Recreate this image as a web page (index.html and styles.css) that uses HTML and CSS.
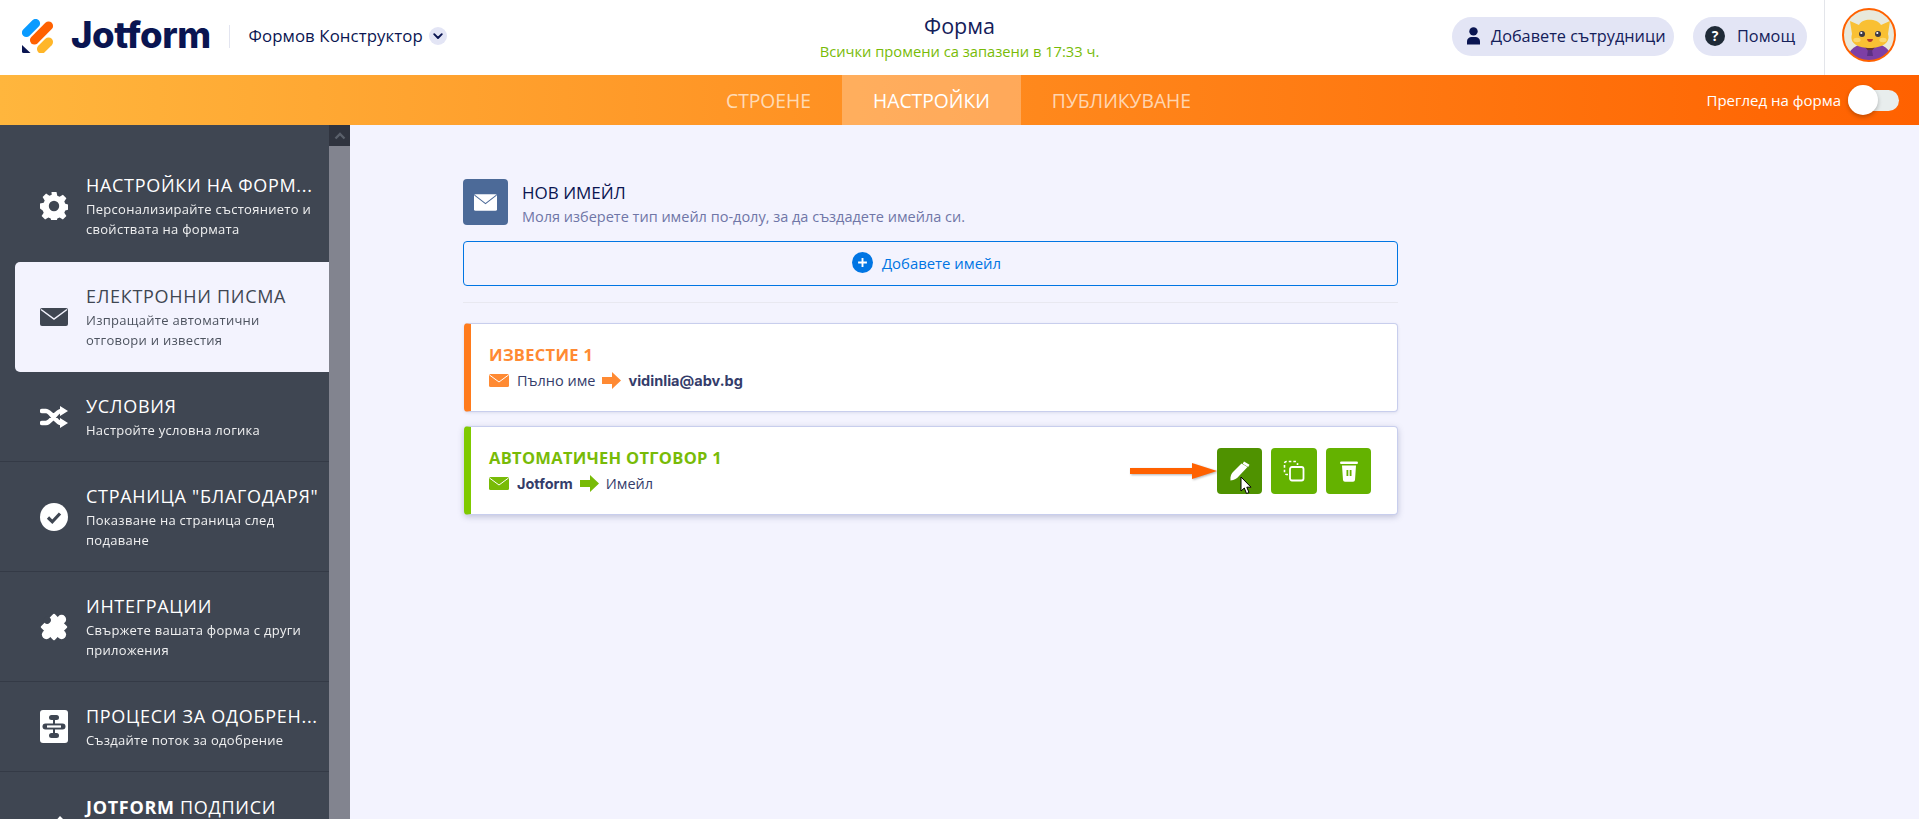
FILE: index.html
```html
<!DOCTYPE html>
<html lang="bg">
<head>
<meta charset="utf-8">
<title>Форма</title>
<link rel="stylesheet" href="styles.css">
</head>
<body>
<header class="topbar">
  <div class="brand">
    <svg class="logo-mark" viewBox="0 0 32 34" width="32" height="34">
      <rect x="-4.500" y="-11" width="9" height="22" rx="4.500" transform="translate(9 9) rotate(45)" fill="#0a9bff"/>
      <rect x="-4.500" y="-14.500" width="9" height="29" rx="4.500" transform="translate(19.500 14) rotate(45)" fill="#ff6100"/>
      <rect x="-4.500" y="-9.500" width="9" height="19" rx="4.500" transform="translate(23 26.500) rotate(45)" fill="#ffb629"/>
      <path d="M0 26 L8.500 34 H1.500 Q0 34 0 32.500 Z" fill="#0a1551"/>
    </svg>
    <span class="wordmark">Jotform</span>
    <span class="brand-sep"></span>
    <span class="builder">Формов Конструктор</span>
    <span class="chev"><svg viewBox="0 0 14 14" width="14" height="14"><path d="M3.200 5.200 7 9 10.800 5.200" fill="none" stroke="#0a1551" stroke-width="1.900" stroke-linecap="round" stroke-linejoin="round"/></svg></span>
  </div>
  <div class="doc">
    <div class="doc-title">Форма</div>
    <div class="doc-status">Всички промени са запазени в 17:33 ч.</div>
  </div>
  <div class="actions">
    <a class="pill collab"><svg viewBox="0 0 14 18" width="15" height="18"><circle cx="7" cy="4.400" r="4.200" fill="#0a1551"/><path d="M0.500 17.500v-3.200C.5 11.600 2.600 10 5 10h4c2.400 0 4.500 1.600 4.500 4.300v3.200z" fill="#0a1551"/></svg>Добавете сътрудници</a>
    <a class="pill help"><svg viewBox="0 0 20 20" width="20" height="20"><circle cx="10" cy="10" r="10" fill="#1f2a37"/><text x="10" y="15" text-anchor="middle" class="q">?</text></svg>Помощ</a>
    <div class="avatar-wrap">
      <svg class="avatar" viewBox="0 0 54 54" width="54" height="54">
        <defs><clipPath id="av"><circle cx="27" cy="27" r="26"/></clipPath></defs>
        <circle cx="27" cy="27" r="26" fill="#e8e9dc"/>
        <g clip-path="url(#av)">
          <path d="M5 54c0-12 9-19 23-19s22 7 22 19z" fill="#7d3fa5"/>
          <path d="M22 38h12l-6 7z" fill="#6a3a28"/>
          <path d="M26 42h4l1 6h-6z" fill="#5c2f82"/>
          <path d="M8 13l9 4c3-7 18-7 22 0l9-4-2 13c3 9-7 14-18 14S7 36 10 26z" fill="#f9c033"/>
          <circle cx="20" cy="26" r="3" fill="#3e3a44"/>
          <circle cx="36" cy="26" r="3" fill="#3e3a44"/>
          <circle cx="19.300" cy="25" r="1.100" fill="#fff"/>
          <circle cx="35.300" cy="25" r="1.100" fill="#fff"/>
          <ellipse cx="15" cy="32" rx="3.600" ry="2.200" fill="#fbd76e"/>
          <ellipse cx="41" cy="32" rx="3.600" ry="2.200" fill="#fbd76e"/>
          <path d="M25 31h6q-.5 3-3 3t-3-3z" fill="#b5382a"/>
        </g>
        <circle cx="27" cy="27" r="26" fill="none" stroke="#ff6100" stroke-width="2"/>
      </svg>
    </div>
  </div>
</header>

<nav class="tabs">
  <div class="tab-list">
    <a class="tab">СТРОЕНЕ</a>
    <a class="tab active">НАСТРОЙКИ</a>
    <a class="tab">ПУБЛИКУВАНЕ</a>
  </div>
  <div class="preview">
    <span>Преглед на форма</span>
    <span class="switch"><span class="knob"></span></span>
  </div>
</nav>

<div class="body">
  <aside class="sidebar">
    <ul class="menu">
      <li class="item first">
        <svg class="mi" viewBox="0 0 28 28" width="28" height="28"><path fill="#fff" fill-rule="evenodd" d="M11.500 0h5l.8 3.800 2.300 1 3.300-2.100 3.500 3.500-2.100 3.300 1 2.300 3.700.8v5l-3.700.8-1 2.300 2.100 3.300-3.500 3.500-3.300-2.100-2.300 1-.8 3.600h-5l-.8-3.600-2.300-1-3.300 2.100-3.500-3.500 2.100-3.300-1-2.300L0 16.500v-5l3.700-.8 1-2.300L2.600 5.100l3.500-3.500 3.300 2.100 2.300-1zM14 8.800a5.200 5.200 0 1 0 0 10.400 5.200 5.200 0 0 0 0-10.400z"/></svg>
        <div class="it"><div class="tt">НАСТРОЙКИ НА ФОРМ...</div><div class="ds">Персонализирайте състоянието и свойствата на формата</div></div>
      </li>
      <li class="item active">
        <svg class="mi" viewBox="0 0 28 18" width="28" height="18"><rect width="28" height="18" rx="2" fill="#3f4652"/><path d="M1 1.500 14 11 27 1.500" fill="none" stroke="#f3f3fe" stroke-width="1.500"/></svg>
        <div class="it"><div class="tt">ЕЛЕКТРОННИ ПИСМА</div><div class="ds">Изпращайте автоматични отговори и известия</div></div>
      </li>
      <li class="item">
        <svg class="mi" viewBox="0 0 28 22" width="28" height="22"><path fill="none" stroke="#fff" stroke-width="4.600" stroke-linecap="round" d="M2 5h4c5 0 10 12 15 12h2M2 17h4c5 0 10-12 15-12h2"/><path fill="#fff" d="M20 0l8 5-8 5zM20 12l8 5-8 5z"/></svg>
        <div class="it"><div class="tt">УСЛОВИЯ</div><div class="ds">Настройте условна логика</div></div>
      </li>
      <li class="item">
        <svg class="mi" viewBox="0 0 28 28" width="28" height="28"><circle cx="14" cy="14" r="14" fill="#fff"/><path d="M8 14.500l4.300 4.300L20 10.500" fill="none" stroke="#3f4652" stroke-width="3.200"/></svg>
        <div class="it"><div class="tt">СТРАНИЦА "БЛАГОДАРЯ"</div><div class="ds">Показване на страница след подаване</div></div>
      </li>
      <li class="item">
        <svg class="mi" viewBox="1 1 26 26" width="28" height="28"><g transform="rotate(45 14 14)"><rect x="5" y="5" width="18" height="18" rx="1" fill="#fff"/><circle cx="14" cy="4" r="4.200" fill="#fff"/><circle cx="24" cy="14" r="4.200" fill="#fff"/><circle cx="14" cy="24" r="4.200" fill="#fff"/><circle cx="5" cy="14" r="3.400" fill="#3f4652"/></g></svg>
        <div class="it"><div class="tt">ИНТЕГРАЦИИ</div><div class="ds">Свържете вашата форма с други приложения</div></div>
      </li>
      <li class="item">
        <svg class="mi" viewBox="0 0 28 33" width="28" height="33"><rect width="28" height="33" rx="3" fill="#fff"/><g fill="#3f4652"><rect x="9" y="5" width="10" height="5" rx="2.500"/><rect x="2.500" y="13.500" width="23" height="6" rx="3"/><rect x="9" y="23" width="10" height="5" rx="2.500"/><rect x="13" y="9" width="2" height="15"/></g><rect x="7" y="15.400" width="14" height="2.200" fill="#fff"/></svg>
        <div class="it"><div class="tt">ПРОЦЕСИ ЗА ОДОБРЕН...</div><div class="ds">Създайте поток за одобрение</div></div>
      </li>
      <li class="item last">
        <svg class="mi" viewBox="0 0 28 28" width="28" height="28"><path fill="#fff" d="M20 1l7 7-15 15-9 3 3-9z"/></svg>
        <div class="it"><div class="tt"><b>JOTFORM</b> ПОДПИСИ</div></div>
      </li>
    </ul>
    <div class="scroll"><div class="scroll-up"><svg viewBox="0 0 12 8" width="12" height="8"><path d="M1.500 6.500 6 2l4.500 4.500" fill="none" stroke="#5a606b" stroke-width="2.400"/></svg></div></div>
  </aside>

  <main class="main">
    <section class="panel">
      <div class="head">
        <span class="head-ico"><svg viewBox="0 0 22 16" width="23" height="17"><rect width="22" height="16" rx="1.500" fill="#fff"/><path d="M.5 1 11 9 21.500 1" fill="none" stroke="#4c6a98" stroke-width="1"/></svg></span>
        <div class="head-txt">
          <div class="head-t">НОВ ИМЕЙЛ</div>
          <div class="head-d">Моля изберете тип имейл по-долу, за да създадете имейла си.</div>
        </div>
      </div>
      <button class="add"><svg viewBox="0 0 20 20" width="21" height="21"><circle cx="10" cy="10" r="10" fill="#0075e3"/><path d="M10 5.800v8.400M5.800 10h8.400" stroke="#fff" stroke-width="1.800"/></svg>Добавете имейл</button>
      <div class="rule"></div>

      <article class="card orange">
        <div class="c-t">ИЗВЕСТИЕ 1</div>
        <div class="c-l">
          <svg viewBox="0 0 20 13" width="20" height="13"><rect width="20" height="13" rx="1.500" fill="#ff8a33"/><path d="M.5 1 10 8 19.500 1" fill="none" stroke="#fff" stroke-width="1"/></svg>
          <span>Пълно име</span>
          <svg class="arr" viewBox="0 0 19 17" width="19" height="17"><path d="M0 5h10V0l9 8.500-9 8.500v-5H0z" fill="#ff8a33"/></svg>
          <strong>vidinlia@abv.bg</strong>
        </div>
      </article>

      <article class="card green">
        <div class="c-t">АВТОМАТИЧЕН ОТГОВОР 1</div>
        <div class="c-l">
          <svg viewBox="0 0 20 13" width="20" height="13"><rect width="20" height="13" rx="1.500" fill="#78bb07"/><path d="M.5 1 10 8 19.500 1" fill="none" stroke="#fff" stroke-width="1"/></svg>
          <strong>Jotform</strong>
          <svg class="arr" viewBox="0 0 19 17" width="19" height="17"><path d="M0 5h10V0l9 8.500-9 8.500v-5H0z" fill="#78bb07"/></svg>
          <span>Имейл</span>
        </div>
        <div class="btns">
          <svg class="callout" viewBox="0 0 87 18" width="87" height="18"><path d="M0 6h62V1l25 8-25 8v-5H0z" fill="#ff6100"/></svg>
          <span class="b hover"><svg viewBox="0 0 20 20" width="20" height="20"><path d="M.5 19.500c-.5-4.500 1-7 3-9l8-8 6 3.500-8.500 9c-2 2.200-4.500 4.500-8.500 4.500z" fill="#fff"/><path d="M14 .5 19.500 3.700 18.200 6 12.700 2.800z" fill="#fff"/></svg>
            <svg class="cursor" viewBox="0 0 12 19" width="12" height="19"><path d="M1 1v14l3.300-3 2.200 5.500 2.500-1-2.200-5.300H11z" fill="#fff" stroke="#000" stroke-width="1"/></svg></span>
          <span class="b"><svg viewBox="0 0 22 22" width="22" height="22"><path d="M5 14.500H3.500a2 2 0 0 1-2-2V3.500a2 2 0 0 1 2-2h9a2 2 0 0 1 2 2V5" fill="none" stroke="#fff" stroke-width="1.600" stroke-dasharray="2.600 2"/><rect x="7" y="7" width="13.500" height="13.500" rx="2" fill="none" stroke="#fff" stroke-width="1.800"/></svg></span>
          <span class="b last-b"><svg viewBox="0 0 18 22" width="18" height="22"><rect x="0" y="1.500" width="18" height="2.600" rx="1.300" fill="#fff"/><path d="M2 5.500h14l-1 14.500a2 2 0 0 1-2 1.800H5a2 2 0 0 1-2-1.800z" fill="#fff"/><rect x="6.500" y="10" width="1.800" height="6" fill="#64b200"/><rect x="9.700" y="10" width="1.800" height="6" fill="#64b200"/></svg></span>
        </div>
      </article>
    </section>
  </main>
</div>
</body>
</html>
```
FILE: styles.css
```css
* { box-sizing: border-box; }
html, body { margin: 0; height: 100%; overflow: hidden; }
body { font-family: "Open Sans", "Noto Sans", sans-serif; background: #f3f3fe; color: #0a1551; height: 819px; display: flex; flex-direction: column; }

.topbar { height: 75px; background: #fff; display: grid; grid-template-columns: 1fr auto 1fr; align-items: center; flex: none; padding-left: 22px; }
.brand { display: flex; align-items: center; margin-top: -3px; }
.wordmark { font-family: Inter, "Liberation Sans", sans-serif; font-weight: 800; font-size: 36.500px; line-height: 40px; letter-spacing: -0.5px; margin: -3px 0 0 17px; color: #0a1551; }
.brand-sep { width: 1px; height: 23px; background: #e3e5f0; margin: 0 18px 0 19px; }
.builder { font-size: 16.800px; letter-spacing: 0.1px; margin-top: -2px; }
.chev { width: 18px; height: 18px; border-radius: 50%; background: #e3e5f5; margin-left: 6px; display: flex; align-items: center; justify-content: center; }

.doc { text-align: center; margin: -1px 0 0 -22px; }
.doc-title { font-size: 21.500px; line-height: 28px; color: #14205a; }
.doc-status { font-size: 14.700px; line-height: 22px; color: #78bb07; }

.actions { display: flex; justify-content: flex-end; align-items: center; height: 75px; }
.pill { height: 39px; border-radius: 20px; background: #e3e5f5; display: flex; align-items: center; font-size: 16.300px; color: #14205a; margin-top: -3px; padding-bottom: 1px; white-space: nowrap; }
.collab { width: 222px; padding-left: 14px; gap: 10px; }
.help { width: 114px; margin-left: 19px; padding-left: 12px; gap: 12px; }
.q { fill: #fff; font: 700 14px "Open Sans", sans-serif; }
.avatar-wrap { width: 95px; flex: none; height: 75px; margin-left: 17px; border-left: 1px solid #e3e5ea; padding: 8px 0 0 17px; }

.tabs { height: 50px; flex: none; background: linear-gradient(90deg, #ffb63d 0%, #ff6100 100%); display: flex; align-items: stretch; }
.tab-list { display: flex; margin-left: 695px; }
.tab { padding: 0 31px; display: flex; align-items: center; font-size: 19.300px; color: rgba(255,255,255,.68); }
.tab.active { background: rgba(255,255,255,.27); color: #fff; }
.preview { margin-left: auto; display: flex; align-items: center; color: #fff; font-size: 15px; padding-right: 20px; }
.switch { width: 51px; height: 21px; background: #e8eded; border-radius: 11px; margin-left: 7px; position: relative; }
.knob { position: absolute; left: 0; top: -4.500px; width: 30px; height: 30px; border-radius: 50%; background: #fff; box-shadow: 0 2px 4px rgba(0,0,0,.25); }

.body { flex: 1; display: flex; min-height: 0; }
.sidebar { width: 350px; flex: none; background: #3f4652; display: flex; overflow: hidden; }
.menu { list-style: none; margin: 0; padding: 0; width: 329px; flex: none; }
.item { display: flex; align-items: center; gap: 18px; padding: 0 0 0 40px; border-bottom: 1px solid #343a46; color: #fff; min-height: 110px; }
.item.first { height: 137px; border-bottom: none; padding-top: 25px; }
.item.active { background: #f3f3fe; color: #3f4652; margin-left: 15px; padding-left: 25px; border-radius: 5px 0 0 5px; border-bottom: none; }
.item:nth-child(3) { min-height: 90px; }
.item:nth-child(6) { min-height: 90px; }
.item.last { align-items: flex-start; padding-top: 23px; }
.item.last .mi { margin-top: 20px; }
.mi { flex: none; }
.it { min-width: 0; width: 232px; }
.tt { font-size: 18px; line-height: 24px; letter-spacing: 0.7px; white-space: nowrap; }
.tt b { font-weight: 700; }
.ds { font-size: 13px; line-height: 20px; letter-spacing: 0.28px; opacity: .92; margin-top: 2px; }
.scroll { width: 21px; background: #82848f; flex: none; }
.scroll-up { height: 21px; background: #30343f; display: flex; align-items: center; justify-content: center; }

.main { flex: 1; min-width: 0; padding: 54px 0 0 113px; }
.panel { width: 935px; }
.head { display: flex; gap: 14px; height: 46px; }
.head-ico { width: 45px; height: 46px; background: #4c6a98; border-radius: 4px; display: flex; align-items: center; justify-content: center; flex: none; }
.head-txt { padding-top: 3px; }
.head-t { font-size: 17px; line-height: 22px; color: #0a1551; }
.head-d { font-size: 14.500px; line-height: 21px; margin-top: 2px; color: #6f76a7; white-space: nowrap; }
.add { width: 100%; height: 45px; margin-top: 16px; border: 1px solid #0075e3; border-radius: 4px; background: transparent; display: flex; align-items: center; justify-content: center; gap: 9px; color: #0075e3; font: 14.900px "Open Sans", sans-serif; padding: 0 8px 2px 0; }
.rule { height: 1px; background: #e8e8f0; margin: 16px 0 20px; }
.card { height: 89px; background: #fff; border-radius: 4px; border: 1px solid #c8ceed; border-left: 7px solid; padding: 20px 0 0 18px; margin: 0 0 14px 1px; position: relative; box-shadow: 0 1px 3px rgba(60,70,120,.12); }
.card.orange { border-left-color: #ff7b1c; }
.card.green { border-left-color: #7fca00; box-shadow: 0 2px 6px rgba(60,70,120,.28); }
.c-t { font-size: 16.500px; line-height: 22px; font-weight: 700; letter-spacing: 0.3px; }
.orange .c-t { color: #ff8a33; }
.green .c-t { color: #78bb07; }
.c-l { display: flex; align-items: center; height: 26px; font-size: 14.500px; color: #343c6a; margin-top: 1px; }
.c-l svg:first-child { margin-right: 8px; }
.c-l .arr { margin: 0 7px; }
.c-l strong { font-family: Inter, sans-serif; font-weight: 700; font-size: 14.500px; letter-spacing: 0; }
.btns { position: absolute; right: 26px; top: 21px; display: flex; gap: 9px; align-items: center; }
.b { width: 46px; height: 46px; background: #64b200; border-radius: 4px; display: flex; align-items: center; justify-content: center; position: relative; }
.b.hover { background: #4f9200; width: 45px; }
.b.last-b { width: 45px; }
.callout { position: absolute; left: -87px; top: 14px; filter: drop-shadow(1px 1px 1px rgba(0,0,0,.3)); }
.cursor { position: absolute; left: 23px; top: 28px; }
```
